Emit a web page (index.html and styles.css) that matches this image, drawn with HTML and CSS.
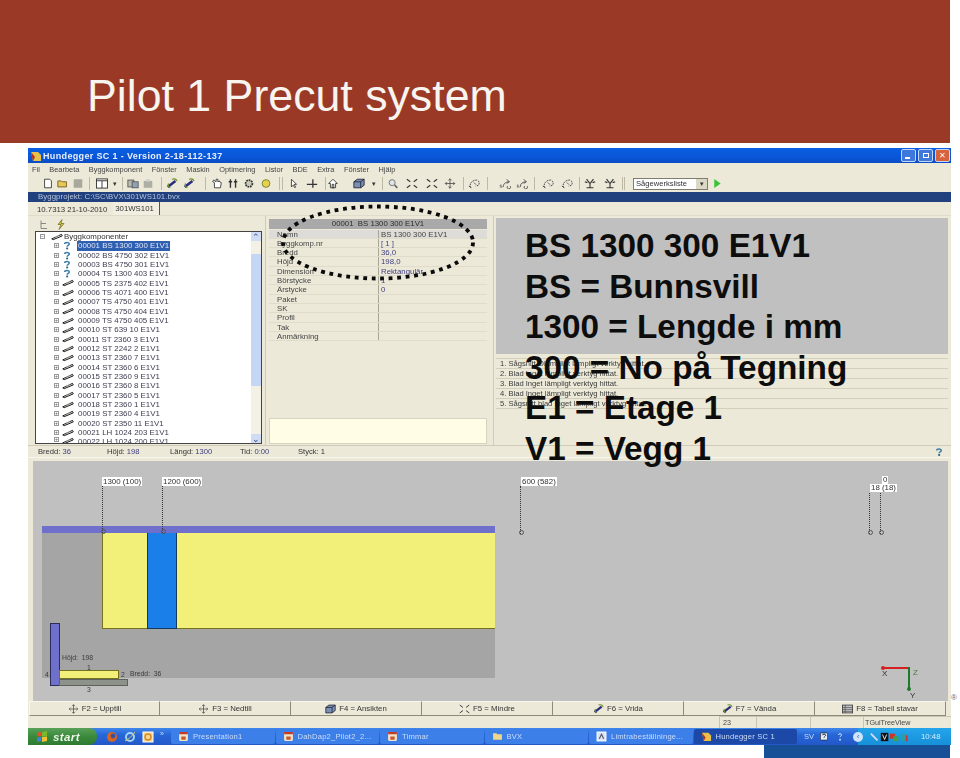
FILE: index.html
```html
<!DOCTYPE html>
<html lang="sv">
<head>
<meta charset="utf-8">
<title>Pilot 1 Precut system</title>
<link rel="stylesheet" href="styles.css">
</head>
<body>
<svg class="defs" width="0" height="0" aria-hidden="true">
  <symbol id="beam" viewBox="0 0 16 9"><path d="M1 7 14 1M3 8 15 3M1 7l2 1M14 1l1 2" fill="none" stroke="#111" stroke-width="1.300"/><path d="M5 5l6-2.600" stroke="#ddd" stroke-width=".7"/></symbol>
  <symbol id="help" viewBox="0 0 10 10"><path d="M2.200 3.200C2.200.8 7.800.6 7.800 3.200 7.800 5 5.200 4.800 5.200 6.600" fill="none" stroke="#3d7fa8" stroke-width="2"/><rect x="4" y="7.600" width="2.400" height="2.200" fill="#2a5f80"/></symbol>
  <symbol id="app" viewBox="0 0 10 10"><rect x="1" y="1" width="8" height="8" rx="1" fill="#f2e4c6"/><path d="M1 3h8V1H1z" fill="#c63c2a"/><path d="M3 5h4v3H3z" fill="#c8582e"/></symbol>
  <symbol id="move" viewBox="0 0 14 14"><path d="M7 1v12M1 7h12M5 3l2-2 2 2M5 11l2 2 2-2M3 5 1 7l2 2M11 5l2 2-2 2" fill="none" stroke="#444" stroke-width="1"/></symbol>
  <symbol id="box" viewBox="0 0 14 12"><path d="M1 4 5 1h8v7l-4 3H1z" fill="#7b8fb5" stroke="#223" stroke-width="1"/><path d="M1 4h8v7M9 4l4-3" fill="none" stroke="#223"/></symbol>
  <symbol id="rot" viewBox="0 0 14 12"><path d="M2 10 11 3" stroke="#2c2f7e" stroke-width="3"/><path d="M7 1c3-1 5 0 6 2M3 6c-1 2 0 4 2 5" fill="none" stroke="#6d8e2a" stroke-width="1.400"/></symbol>
  <symbol id="corners" viewBox="0 0 14 12"><path d="M1 1l4 3M13 1 9 4M1 11l4-3M13 11 9 8" stroke="#333" stroke-width="1.200" fill="none"/></symbol>
  <symbol id="table" viewBox="0 0 14 11"><rect x=".5" y=".5" width="13" height="10" fill="#c6c6c6" stroke="#333"/><path d="M.5 3.500h13M.5 6h13M.5 8.500h13M4 .5v10" stroke="#444" stroke-width=".8"/></symbol>
  <symbol id="spark" viewBox="0 0 14 12"><path d="M1 10h3M1 8h2M5 10C5 6 8 4 12 4M9 1l3 3-3 2M10 9a2 2 0 1 0 3 0" fill="none" stroke="#444" stroke-width="1"/></symbol>
  <symbol id="curl" viewBox="0 0 14 12"><path d="M3 11C1 6 5 2 10 2c2 0 3 2 3 4s-2 3-4 3M1 9l3 2M7 5l3 3" fill="none" stroke="#444" stroke-width="1.100" stroke-dasharray="2 1"/></symbol>
  <symbol id="fork" viewBox="0 0 14 12"><path d="M7 11V6M3 1l4 5 4-5M1 4l3 1M13 4l-3 1M3 11h8" fill="none" stroke="#333" stroke-width="1.300"/></symbol>
</svg>

<header class="banner"><h1 class="banner-title">Pilot 1 Precut system</h1></header>

<main class="window">
  <div class="titlebar">
    <svg class="title-icon" viewBox="0 0 12 12"><path d="M1 2h7l3 3v6H3z" fill="#e8c04a"/><path d="M1 2l4 5-2 4z" fill="#b02e1e"/></svg>
    <span class="title-text">Hundegger SC 1 - Version 2-18-112-137</span>
    <div class="win-btns"><span class="win-btn"><i class="glyph-min"></i></span><span class="win-btn"><i class="glyph-max"></i></span><span class="win-btn win-close">✕</span></div>
  </div>
  <nav class="menubar"><span>Fil</span><span>Bearbeta</span><span>Byggkomponent</span><span>Fönster</span><span>Maskin</span><span>Optimering</span><span>Listor</span><span>BDE</span><span>Extra</span><span>Fönster</span><span>Hjälp</span></nav>
  <div class="toolbar">
    <svg class="tb-ic" viewBox="0 0 14 12"><path d="M3 1h6l2 2v8H3z" fill="#fff" stroke="#333"/></svg>
    <svg class="tb-ic ml3" viewBox="0 0 14 12"><path d="M1 10V3h4l1 1h5v6z" fill="#e8c85a" stroke="#6b5a1a"/></svg>
    <svg class="tb-ic ml3" viewBox="0 0 14 12"><rect x="2" y="1" width="10" height="10" fill="#a8a89c"/></svg>
    <i class="tb-sep ml5"></i>
    <svg class="tb-ic tb-wide ml5" viewBox="0 0 14 12"><rect x="1" y="1" width="12" height="10" fill="#fff" stroke="#333"/><path d="M1 3h12M7 3v8" stroke="#333"/></svg>
    <span class="tb-caret ml4">▾</span>
    <i class="tb-sep ml5"></i>
    <svg class="tb-ic ml4" viewBox="0 0 14 12"><rect x="1" y="2" width="7" height="8" fill="#b9b9ad" stroke="#555"/><rect x="6" y="4" width="7" height="7" fill="#8fa3b8" stroke="#555"/></svg>
    <svg class="tb-ic ml3" viewBox="0 0 14 12"><rect x="2" y="3" width="10" height="8" fill="#aeaea4"/><rect x="5" y="1" width="4" height="3" fill="#ccc"/></svg>
    <i class="tb-sep ml7"></i>
    <svg class="tb-ic ml4"><use href="#rot"/></svg>
    <svg class="tb-ic ml5"><use href="#rot"/></svg>
    <i class="tb-sep ml10"></i>
    <svg class="tb-ic ml5" viewBox="0 0 14 12"><path d="M4 11V5L2 4l1-2 3 2V1h2v3l2-1v1l2 1-1 6z" fill="#fff" stroke="#333"/></svg>
    <svg class="tb-ic ml4" viewBox="0 0 14 12"><path d="M4 1v10M10 1v10M2 4h4M8 4h4" stroke="#333" stroke-width="1.600"/></svg>
    <svg class="tb-ic ml4" viewBox="0 0 14 12"><circle cx="7" cy="6" r="4" fill="#c8c8b8" stroke="#333" stroke-width="2" stroke-dasharray="2 1"/></svg>
    <svg class="tb-ic ml5" viewBox="0 0 14 12"><circle cx="7" cy="6" r="4.500" fill="#e8d24a" stroke="#6d7a2a"/></svg>
    <i class="tb-sep ml7"></i><i class="tb-sep ml2"></i>
    <svg class="tb-ic ml5" viewBox="0 0 14 12"><path d="M4 1v9l2-2 2 3 1-1-2-3h3z" fill="#fff" stroke="#333"/></svg>
    <svg class="tb-ic ml6" viewBox="0 0 14 12"><path d="M8 1v10M1 7h12" stroke="#333" stroke-width="1.500"/></svg>
    <i class="tb-sep ml7"></i>
    <svg class="tb-ic ml1" viewBox="0 0 14 12"><path d="M7 1 2 6h2v5h6V6h2zM6 7h2v4H6z" fill="#fff" stroke="#333"/></svg>
    <svg class="tb-ic ml14"><use href="#box"/></svg>
    <span class="tb-caret ml7">▾</span>
    <i class="tb-sep ml6"></i>
    <svg class="tb-ic ml4" viewBox="0 0 14 12"><circle cx="6" cy="5" r="3.500" fill="#dfe6ea" stroke="#666"/><path d="M9 8l3 3" stroke="#666" stroke-width="2"/></svg>
    <svg class="tb-ic ml7"><use href="#corners"/></svg>
    <svg class="tb-ic ml8"><use href="#corners"/></svg>
    <svg class="tb-ic ml6"><use href="#move"/></svg>
    <i class="tb-sep ml7"></i>
    <svg class="tb-ic ml4"><use href="#curl"/></svg>
    <i class="tb-sep ml7"></i>
    <svg class="tb-ic ml11"><use href="#spark"/></svg>
    <svg class="tb-ic ml5"><use href="#spark"/></svg>
    <i class="tb-sep ml6"></i>
    <svg class="tb-ic ml7"><use href="#curl"/></svg>
    <svg class="tb-ic ml7"><use href="#curl"/></svg>
    <i class="tb-sep ml6"></i>
    <svg class="tb-ic ml4"><use href="#fork"/></svg>
    <svg class="tb-ic ml8"><use href="#fork"/></svg>
    <i class="tb-sep ml6"></i><i class="tb-sep ml1"></i>
    <div class="combo ml8"><span>Sågewerksliste</span><b>▾</b></div>
    <svg class="tb-ic tb-play ml3" viewBox="0 0 10 12"><path d="M2 1l7 5-7 5z" fill="#3dc33a"/></svg>
  </div>
  <div class="projectbar">Byggprojekt: C:\SC\BVX\301WS101.bvx</div>
  <div class="tabs"><span class="tab">10.7313 21-10-2010</span><span class="tab tab-active">301WS101</span></div>

  <div class="workspace">
    <section class="tree-col">
      <div class="tree-tools">
        <svg viewBox="0 0 10 10"><path d="M2 1v8h6M2 4h5" fill="none" stroke="#888"/></svg>
        <svg viewBox="0 0 10 10"><path d="M6 0 2 5h3L3 10l5-6H5z" fill="#d8c84a" stroke="#6b6a1a" stroke-width=".7"/></svg>
      </div>
      <div class="tree">
        <div class="tree-list">
          <div class="tree-root"><i class="exp">−</i><svg class="node-ic"><use href="#beam"/></svg>Byggkomponenter</div>
          <div class="node"><i class="exp">+</i><svg class="node-q"><use href="#help"/></svg><span class="selected">00001 BS 1300 300 E1V1</span></div>
          <div class="node"><i class="exp">+</i><svg class="node-q"><use href="#help"/></svg><span>00002 BS 4750 302 E1V1</span></div>
          <div class="node"><i class="exp">+</i><svg class="node-q"><use href="#help"/></svg><span>00003 BS 4750 301 E1V1</span></div>
          <div class="node"><i class="exp">+</i><svg class="node-q"><use href="#help"/></svg><span>00004 TS 1300 403 E1V1</span></div>
          <div class="node"><i class="exp">+</i><svg class="node-ic"><use href="#beam"/></svg><span>00005 TS 2375 402 E1V1</span></div>
          <div class="node"><i class="exp">+</i><svg class="node-ic"><use href="#beam"/></svg><span>00006 TS 4071 400 E1V1</span></div>
          <div class="node"><i class="exp">+</i><svg class="node-ic"><use href="#beam"/></svg><span>00007 TS 4750 401 E1V1</span></div>
          <div class="node"><i class="exp">+</i><svg class="node-ic"><use href="#beam"/></svg><span>00008 TS 4750 404 E1V1</span></div>
          <div class="node"><i class="exp">+</i><svg class="node-ic"><use href="#beam"/></svg><span>00009 TS 4750 405 E1V1</span></div>
          <div class="node"><i class="exp">+</i><svg class="node-ic"><use href="#beam"/></svg><span>00010 ST 639 10 E1V1</span></div>
          <div class="node"><i class="exp">+</i><svg class="node-ic"><use href="#beam"/></svg><span>00011 ST 2360 3 E1V1</span></div>
          <div class="node"><i class="exp">+</i><svg class="node-ic"><use href="#beam"/></svg><span>00012 ST 2242 2 E1V1</span></div>
          <div class="node"><i class="exp">+</i><svg class="node-ic"><use href="#beam"/></svg><span>00013 ST 2360 7 E1V1</span></div>
          <div class="node"><i class="exp">+</i><svg class="node-ic"><use href="#beam"/></svg><span>00014 ST 2360 6 E1V1</span></div>
          <div class="node"><i class="exp">+</i><svg class="node-ic"><use href="#beam"/></svg><span>00015 ST 2360 9 E1V1</span></div>
          <div class="node"><i class="exp">+</i><svg class="node-ic"><use href="#beam"/></svg><span>00016 ST 2360 8 E1V1</span></div>
          <div class="node"><i class="exp">+</i><svg class="node-ic"><use href="#beam"/></svg><span>00017 ST 2360 5 E1V1</span></div>
          <div class="node"><i class="exp">+</i><svg class="node-ic"><use href="#beam"/></svg><span>00018 ST 2360 1 E1V1</span></div>
          <div class="node"><i class="exp">+</i><svg class="node-ic"><use href="#beam"/></svg><span>00019 ST 2360 4 E1V1</span></div>
          <div class="node"><i class="exp">+</i><svg class="node-ic"><use href="#beam"/></svg><span>00020 ST 2350 11 E1V1</span></div>
          <div class="node"><i class="exp">+</i><svg class="node-ic"><use href="#beam"/></svg><span>00021 LH 1024 203 E1V1</span></div>
          <div class="node node-last"><i class="exp">+</i><svg class="node-ic"><use href="#beam"/></svg><span>00022 LH 1024 200 E1V1</span></div>
        </div>
        <div class="scrollbar"><span class="arrow">⌃</span><span class="track"></span><span class="thumb"></span><span class="track-low"></span><span class="arrow">⌄</span></div>
      </div>
    </section>

    <section class="props">
      <div class="props-head">00001&nbsp; BS 1300 300 E1V1</div>
      <dl class="props-table">
        <div class="prop prop-first"><dt>Namn</dt><dd class="dark">BS 1300 300 E1V1</dd></div>
        <div class="prop"><dt>Byggkomp.nr</dt><dd>[ 1 ]</dd></div>
        <div class="prop"><dt>Bredd</dt><dd>36,0</dd></div>
        <div class="prop"><dt>Höjd</dt><dd>198,0</dd></div>
        <div class="prop"><dt>Dimension</dt><dd>Rektangulär</dd></div>
        <div class="prop"><dt>Börstycke</dt><dd>1</dd></div>
        <div class="prop"><dt>Ärstycke</dt><dd>0</dd></div>
        <div class="prop"><dt>Paket</dt><dd></dd></div>
        <div class="prop"><dt>SK</dt><dd></dd></div>
        <div class="prop"><dt>Profil</dt><dd></dd></div>
        <div class="prop"><dt>Tak</dt><dd></dd></div>
        <div class="prop"><dt>Anmärkning</dt><dd></dd></div>
      </dl>
      <div class="note"></div>
    </section>

    <section class="info-col">
      <div class="preview"></div>
      <ol class="messages">
        <li>1. Sågsnitt Olämpligt lämpligt verktyg hittat.</li>
        <li>2. Blad Inget lämpligt verktyg hittat.</li>
        <li>3. Blad Inget lämpligt verktyg hittat.</li>
        <li>4. Blad Inget lämpligt verktyg hittat.</li>
        <li>5. Sågsnitt blad Inget lämpligt verktyg hittat.</li>
      </ol>
    </section>
  </div>

  <div class="statusline">
    <span class="stat stat-b">Bredd: <em>36</em></span>
    <span class="stat stat-h">Höjd: <em>198</em></span>
    <span class="stat stat-l">Längd: <em>1300</em></span>
    <span class="stat stat-t">Tid: <em>0:00</em></span>
    <span class="stat">Styck: 1</span>
    <svg class="stat-help"><use href="#help"/></svg>
  </div>

  <div class="canvas">
    <span class="dim dim-a">1300 (100)</span><i class="dash dash-a"></i>
    <span class="dim dim-b">1200 (600)</span><i class="dash dash-b"></i>
    <span class="dim dim-c">600 (582)</span><i class="dash dash-c"></i>
    <span class="dim dim-zero">0</span><span class="dim dim-d">18 (18)</span><i class="dash dash-d"></i><i class="dash dash-e"></i>
    <div class="part-base"></div>
    <div class="part-top"></div>
    <div class="part-yellow"></div>
    <div class="part-blue"></div>
    <div class="mini-col"></div>
    <div class="mini-gray"></div>
    <div class="mini-yellow"></div>
    <span class="lbl lbl-h">Höjd:&nbsp; 198</span>
    <span class="lbl lbl-1">1</span>
    <span class="lbl lbl-4">4</span>
    <span class="lbl lbl-2">2</span>
    <span class="lbl lbl-bw">Bredd:&nbsp; 36</span>
    <span class="lbl lbl-3">3</span>
    <i class="axis-x"></i><i class="axis-y"></i>
    <span class="ax ax-x">X</span><span class="ax ax-z">Z</span><span class="ax ax-yy">Y</span>
  </div>

  <div class="fnbar">
    <button class="fn"><svg><use href="#move"/></svg>F2 = Upptill</button>
    <button class="fn"><svg><use href="#move"/></svg>F3 = Nedtill</button>
    <button class="fn"><svg><use href="#box"/></svg>F4 = Ansikten</button>
    <button class="fn"><svg><use href="#corners"/></svg>F5 = Mindre</button>
    <button class="fn"><svg><use href="#rot"/></svg>F6 = Vrida</button>
    <button class="fn"><svg><use href="#rot"/></svg>F7 = Vända</button>
    <button class="fn"><svg><use href="#table"/></svg>F8 = Tabell stavar</button>
  </div>
  <div class="appstatus">
    <span class="as as-fill"></span><span class="as as-23">23</span><span class="as as-e"></span><span class="as as-e2"></span><span class="as as-tree">TGuiTreeView</span>
  </div>
  <div class="taskbar">
    <div class="start">
      <svg viewBox="0 0 12 12"><path d="M1 2l4-1v4l-4 .5z" fill="#e5502a"/><path d="M6 1l5-1v5l-5 .4z" fill="#7ab92e"/><path d="M1 6.500 5 6v4l-4 1z" fill="#3c84d8"/><path d="M6 6l5-.4V10l-5 1z" fill="#f2c22e"/></svg>
      <span>start</span>
    </div>
    <div class="quick">
      <svg viewBox="0 0 12 12"><circle cx="6" cy="6" r="5" fill="#d8661e"/><circle cx="7" cy="5" r="2.400" fill="#3d4fa0"/></svg>
      <svg viewBox="0 0 12 12"><circle cx="6" cy="6" r="4" fill="none" stroke="#9fd4f4" stroke-width="2"/><path d="M1 10C4 9 9 4 11 1" stroke="#e8c34a" fill="none"/></svg>
      <svg viewBox="0 0 12 12"><rect x="1" y="1" width="10" height="10" fill="#f5d78a" stroke="#fff"/><circle cx="6" cy="6" r="3" fill="none" stroke="#d8862a" stroke-width="1.400"/></svg>
      <span class="more">»</span>
    </div>
    <span class="task"><svg><use href="#app"/></svg>Presentation1</span>
    <span class="task"><svg><use href="#app"/></svg>DahDap2_Pilot2_2...</span>
    <span class="task"><svg><use href="#app"/></svg>Timmar</span>
    <span class="task"><svg viewBox="0 0 10 10"><path d="M1 8V2h3l1 1h4v5z" fill="#f0d78a"/></svg>BVX</span>
    <span class="task"><svg viewBox="0 0 10 10"><rect x="1" y="1" width="8" height="8" fill="#d9e3f2" stroke="#fff"/><path d="M3 7l2-4 2 4" stroke="#556" fill="none"/></svg>Limtrabeställninge...</span>
    <span class="task task-active"><svg viewBox="0 0 12 12"><path d="M1 2h7l3 3v6H3z" fill="#e8c04a"/><path d="M1 2l4 5-2 4z" fill="#b02e1e"/></svg>Hundegger SC 1</span>
    <span class="lang">SV</span>
    <svg class="sv-help" viewBox="0 0 10 10"><rect x=".5" y=".5" width="9" height="9" rx="1" fill="#e8eef8" stroke="#234"/><path d="M3 3.500c0-2 4-2 4 0 0 1.400-2 1.200-2 3" fill="none" stroke="#123" stroke-width="1.200"/></svg>
    <svg class="sv-help sv-q" viewBox="0 0 10 10"><path d="M3 3c0-2 4-2 4 0 0 1.400-2 1.200-2 3" fill="none" stroke="#dce8f8" stroke-width="1.200"/><rect x="4" y="8" width="2" height="2" fill="#dce8f8"/></svg>
    <div class="tray">
      <span class="tray-round">‹</span>
      <svg viewBox="0 0 48 12" class="tray-ic"><path d="M1 2l8 8" stroke="#dde" stroke-width="2"/><rect x="13" y="1" width="9" height="10" fill="#111"/><path d="M15 3l2.500 6 2.500-6" stroke="#fff" fill="none"/><rect x="24" y="2" width="6" height="6" fill="#c9352a"/><rect x="28" y="5" width="6" height="6" fill="#3fa24a"/><rect x="38" y="2" width="4" height="9" fill="#26a0a8"/><rect x="43" y="4" width="2" height="7" fill="#d03030"/></svg>
      <span class="clock">10:48</span>
    </div>
  </div>
</main>
<div class="corner-block"></div>

<svg class="ellipse" viewBox="0 0 210 90" aria-hidden="true"><ellipse cx="103" cy="45.500" rx="95" ry="36" fill="none" stroke="#0a0a0a" stroke-width="3.800" stroke-dasharray="3.800 4.700"/></svg>
<div class="overlay">
  <p>BS 1300 300 E1V1</p>
  <p>BS = Bunnsvill</p>
  <p>1300 = Lengde i mm</p>
  <p>300 = No på Tegning</p>
  <p>E1 = Etage 1</p>
  <p>V1 = Vegg 1</p>
</div>
<span class="reg">®</span>
</body>
</html>
```
FILE: styles.css
```css
* { box-sizing: border-box; }
html, body { margin: 0; padding: 0; }
body { position: relative; width: 960px; height: 758px; overflow: hidden; background: #fff; font-family: "Liberation Sans", Arial, sans-serif; }
.defs { position: absolute; }

.banner { width: 950px; height: 143px; background: #9a3a26; padding: 70px 0 0 87px; }
.banner-title { margin: 0; font-size: 44.700px; line-height: 52px; font-weight: 400; color: #f8f4ef; }

.window { width: 923px; height: 597px; margin: 5px 0 0 28px; background: #ece9d8; color: #333; font-size: 7.800px; display: flex; flex-direction: column; filter: blur(.45px); }

.titlebar { height: 15px; background: linear-gradient(#0a5fe0, #0a56d8 60%, #0b4cc4); display: flex; align-items: center; padding-left: 2px; color: #e8eefc; flex: none; }
.title-icon { width: 12px; height: 12px; margin-right: 1px; }
.title-text { font-size: 9px; font-weight: 700; letter-spacing: .35px; }
.win-btns { margin-left: auto; display: flex; gap: 2px; padding-right: 1px; }
.win-btn { width: 15px; height: 13px; border-radius: 2px; background: #3f78dc; border: 1px solid #c4d6f4; display: flex; align-items: center; justify-content: center; color: #fff; font-size: 8px; }
.win-close { background: #d8623c; }
.glyph-min { width: 5px; height: 2px; background: #fff; margin-top: 5px; margin-right: 3px; }
.glyph-max { width: 6px; height: 5px; border: 1px solid #fff; }

.menubar { height: 12px; display: flex; padding-left: 4px; align-items: center; flex: none; color: #444; gap: 9.500px; font-size: 7.400px; }

.toolbar { height: 17px; display: flex; align-items: center; padding-left: 14px; flex: none; }
.tb-ic { width: 12px; height: 11px; flex: none; }
.tb-sep { width: 1px; height: 13px; background: #bdb9a4; flex: none; }
.tb-caret { font-size: 7px; color: #333; }
.tb-wide { width: 14px; }
.ml1 { margin-left: 1px; }
.ml2 { margin-left: 2px; }
.ml3 { margin-left: 3px; }
.ml4 { margin-left: 4px; }
.ml5 { margin-left: 5px; }
.ml6 { margin-left: 6px; }
.ml7 { margin-left: 7px; }
.ml8 { margin-left: 8px; }
.ml10 { margin-left: 10px; }
.ml11 { margin-left: 11px; }
.ml14 { margin-left: 14px; }
.combo { width: 75px; height: 12px; background: #fff; border: 1px solid #7f7d70; display: flex; align-items: center; padding-left: 2px; font-size: 7.600px; justify-content: space-between; flex: none; }
.combo b { width: 11px; height: 10px; background: #dcd8c6; font-size: 7px; text-align: center; line-height: 9px; font-weight: 400; }

.projectbar { height: 10px; background: #20407e; color: #b8c4dc; font-size: 7.800px; letter-spacing: .08px; line-height: 10px; padding-left: 10px; flex: none; }
.tabs { height: 14px; display: flex; align-items: flex-end; padding-left: 9px; gap: 3px; flex: none; font-size: 7.800px; border-bottom: 1px solid #e0dccb; }
.tab { line-height: 11px; padding-right: 3px; }
.tab-active { border-right: 1px solid #555; padding: 0 5px 0 2px; line-height: 13px; background: #f2efe2; }

.workspace { height: 229px; display: flex; flex: none; }
.tree-col { width: 238px; padding: 1px 3px 0 7px; flex: none; border-right: 1px solid #cfcbb8; }
.tree-tools { height: 14px; display: flex; gap: 7px; align-items: center; padding-left: 4px; }
.tree-tools svg { width: 10px; height: 11px; }
.tree { height: 213px; background: #fff; border: 1px solid #444; display: flex; overflow: hidden; }
.tree-list { flex: 1; padding: 0 0 0 4px; overflow: hidden; font-size: 7.900px; color: #3d3d50; }
.tree-root, .node { height: 9.340px; line-height: 9.340px; display: flex; align-items: center; white-space: nowrap; }
.tree-root { color: #333; }
.node { padding-left: 14px; }
.node-last { height: 7px; align-items: flex-start; overflow: hidden; }
.exp { width: 5px; height: 5px; border: 1px solid #999; font-size: 5px; line-height: 3px; text-align: center; font-style: normal; color: #555; flex: none; margin-right: 3px; }
.node-ic { width: 12px; height: 8px; flex: none; margin-right: 4px; }
.tree-root .node-ic { margin-right: 1px; margin-left: 3px; }
.node-q { width: 8px; height: 9px; flex: none; margin: 0 7px 0 1px; }
.selected { background: #2f5fb0; color: #dfe6f5; padding-right: 1px; margin-left: -1px; padding-left: 1px; }
.scrollbar { width: 10px; background: #f3f1e6; display: flex; flex-direction: column; flex: none; }
.arrow { height: 9px; background: #cfdcf4; color: #3a4d8a; font-size: 9px; line-height: 10px; text-align: center; flex: none; overflow: hidden; }
.track { height: 13px; flex: none; }
.thumb { height: 132px; background: #c5d6f5; flex: none; }
.track-low { flex: 1; }

.props { width: 228px; padding: 3px 6px 0 3px; flex: none; border-right: 1px solid #cfcbb8; display: flex; flex-direction: column; }
.props-head { height: 10px; background: #a9a9a9; text-align: center; line-height: 10px; color: #2c2c2c; font-size: 7.800px; flex: none; }
.props-table { margin: .5px 0 0; flex: none; }
.prop { display: flex; height: 9.340px; line-height: 9.340px; border-bottom: 1px solid #dfdccb; }
.prop-first { background: #dddcd8; }
.prop dt { width: 110px; padding-left: 8px; border-right: 1px solid #a8a595; flex: none; color: #444; }
.prop dd { margin: 0; padding-left: 2px; color: #3e3e80; }
.prop dd.dark { color: #444; }
.note { margin-top: auto; height: 26px; margin-bottom: 1px; background: #fffde6; border: 1px solid #d6d3c0; flex: none; }

.info-col { flex: 1; padding: 2px 3px 0 2px; display: flex; flex-direction: column; }
.preview { height: 136px; background: #c0c0c0; flex: none; }
.messages { list-style: none; margin: 4px 0 0; padding: 0; border-top: 1px solid #d2cfbc; font-size: 7.600px; }
.messages li { height: 10px; line-height: 9.500px; padding-left: 4px; border-bottom: 1px solid #d2cfbc; color: #3a3a3a; white-space: nowrap; }

.statusline { height: 13px; display: flex; align-items: center; padding-left: 10px; flex: none; position: relative; border-top: 1px solid #cfcbb8; border-bottom: 1px solid #f8f6ee; font-size: 7.600px; }
.stat em { font-style: normal; color: #3e3e80; }
.stat-b { width: 69px; }
.stat-h { width: 63px; }
.stat-l { width: 70px; }
.stat-t { width: 58px; }
.stat-help { position: absolute; left: 907px; top: 2px; width: 8px; height: 8px; }

.canvas { position: relative; margin: 3px 0 0 5px; width: 915px; height: 240px; background: #c0c0c0; flex: none; }
.dim { position: absolute; background: #fff; padding: 0 1px; line-height: 9px; font-size: 7.900px; color: #333; white-space: nowrap; }
.dim-a { left: 69px; top: 16px; }
.dim-b { left: 129px; top: 16px; }
.dim-c { left: 488px; top: 16px; }
.dim-zero { left: 849px; top: 15px; line-height: 8px; }
.dim-d { left: 837px; top: 23px; line-height: 8px; }
.dash { position: absolute; z-index: 1; width: 0; border-left: 1px dotted #333; top: 25px; height: 47px; }
.dash::after { content: ""; position: absolute; left: -2px; bottom: -1px; width: 3px; height: 3px; border: 1px solid #555; border-radius: 50%; }
.dash-a { left: 69px; }
.dash-b { left: 129px; }
.dash-c { left: 487px; height: 48px; }
.dash-d { left: 836px; top: 32px; height: 41px; }
.dash-e { left: 847px; top: 32px; height: 41px; }

.part-base { position: absolute; left: 9px; top: 72px; width: 453px; height: 145px; background: #a5a5a5; }
.part-top { position: absolute; left: 9px; top: 65px; width: 453px; height: 7px; background: #6f70cc; }
.part-yellow { position: absolute; left: 69px; top: 72px; width: 393px; height: 96px; background: #f3f07a; border-left: 1px solid #77721f; border-bottom: 1px solid #77721f; }
.part-blue { position: absolute; left: 114px; top: 72px; width: 30px; height: 96px; background: #1a7fe8; border-left: 1px solid #153a60; border-right: 1px solid #153a60; border-bottom: 1px solid #153a60; }
.mini-col { position: absolute; left: 17px; top: 162px; width: 10px; height: 63px; background: #6f70cc; border: 1px solid #2c2d5a; }
.mini-gray { position: absolute; left: 26px; top: 218px; width: 69px; height: 7px; background: #8d928a; border: 1px solid #5d625c; }
.mini-yellow { position: absolute; left: 26px; top: 209px; width: 60px; height: 9px; background: #f3f07a; border: 1px solid #77721f; }
.lbl { position: absolute; font-size: 6.800px; line-height: 8px; color: #3a3a3a; white-space: nowrap; }
.lbl-h { left: 29px; top: 193px; }
.lbl-1 { left: 54px; top: 203px; }
.lbl-4 { left: 12px; top: 210px; }
.lbl-2 { left: 88px; top: 210px; }
.lbl-bw { left: 97px; top: 209px; }
.lbl-3 { left: 54px; top: 225px; }
.axis-x { position: absolute; left: 849px; top: 206px; width: 26px; height: 2px; background: #d62020; }
.axis-x::before { content: ""; position: absolute; left: -1px; top: -1px; width: 4px; height: 4px; border-radius: 50%; background: #d62020; }
.axis-y { position: absolute; left: 875px; top: 206px; width: 2px; height: 23px; background: #1e7a2a; }
.axis-y::after { content: ""; position: absolute; left: -1px; bottom: -1px; width: 4px; height: 4px; border-radius: 50%; background: #1e7a2a; }
.ax { position: absolute; font-size: 8px; line-height: 9px; color: #333; }
.ax-x { left: 849px; top: 208px; }
.ax-z { left: 880px; top: 207px; color: #4a7a4a; }
.ax-yy { left: 877px; top: 230px; }

.fnbar { display: grid; grid-template-columns: repeat(7, 131px); height: 15px; flex: none; margin-left: 1px; }
.fn { font: inherit; font-size: 7.800px; color: #333; background: #ece9d8; border: 1px solid #8d8a78; border-left: none; border-top-color: #f8f6ee; display: flex; align-items: center; justify-content: center; gap: 3px; padding: 0; }
.fn:first-child { border-left: 1px solid #f8f6ee; }
.fn svg { width: 11px; height: 10px; }

.appstatus { height: 12px; display: flex; flex: none; font-size: 7.200px; line-height: 11px; color: #444; }
.as { border-right: 1px solid #c9c5b2; border-top: 1px solid #c9c5b2; padding-left: 1px; }
.as-fill { width: 692px; border-top: none; }
.as-23 { width: 37px; padding-left: 3px; }
.as-e { width: 54px; }
.as-e2 { width: 53px; }
.as-tree { flex: 1; border-right: none; }

.taskbar { height: 17px; background: linear-gradient(#3f87ea, #2766d8 40%, #2358c8); display: flex; align-items: center; color: #cddcf6; font-size: 7.800px; flex: none; }
.start { width: 69px; height: 17px; background: linear-gradient(#58a158, #3a8a3c 50%, #2e7a32); border-radius: 0 8px 8px 0; display: flex; align-items: center; gap: 5px; padding-left: 8px; color: #eef5ea; font-size: 11.500px; font-style: italic; font-weight: 700; flex: none; letter-spacing: .4px; }
.start svg { width: 12px; height: 12px; }
.quick { width: 74px; display: flex; gap: 6px; padding-left: 9px; align-items: center; flex: none; }
.quick svg { width: 12px; height: 12px; flex: none; }
.more { font-size: 7px; margin-top: -6px; }
.task { width: 103.500px; height: 15px; margin-right: 1px; background: #3c7fe8; border-radius: 2px; display: flex; align-items: center; gap: 4px; padding-left: 7px; white-space: nowrap; overflow: hidden; flex: none; font-size: 7.600px; letter-spacing: .2px; }
.task svg { width: 11px; height: 11px; flex: none; }
.task-active { background: #1c48a8; margin-right: 0; }
.lang { margin-left: 7px; font-size: 7.500px; }
.sv-help { width: 8px; height: 9px; margin-left: 6px; flex: none; }
.sv-q { margin-left: 8px; }
.tray { margin-left: auto; width: 93px; height: 17px; background: linear-gradient(#25a4ec, #1690d8); display: flex; align-items: center; flex: none; }
.tray-round { width: 10px; height: 10px; margin-left: -5px; border-radius: 50%; background: #cfe4f8; color: #2a6fc8; font-size: 8px; line-height: 9px; text-align: center; flex: none; }
.tray-ic { width: 40px; height: 12px; margin-left: 7px; flex: none; }
.clock { margin-left: 11px; color: #d8ecfa; }

.corner-block { width: 186px; height: 13px; margin-left: 764px; background: #175096; }

.ellipse { position: absolute; left: 275px; top: 197px; width: 210px; height: 90px; }
.overlay { position: absolute; left: 525px; top: 226px; font-size: 33.300px; font-weight: 700; line-height: 40.500px; color: #0d0d0d; white-space: nowrap; }
.overlay p { margin: 0; }
.reg { position: absolute; left: 951px; top: 693px; font-size: 8px; color: #668; }
```
